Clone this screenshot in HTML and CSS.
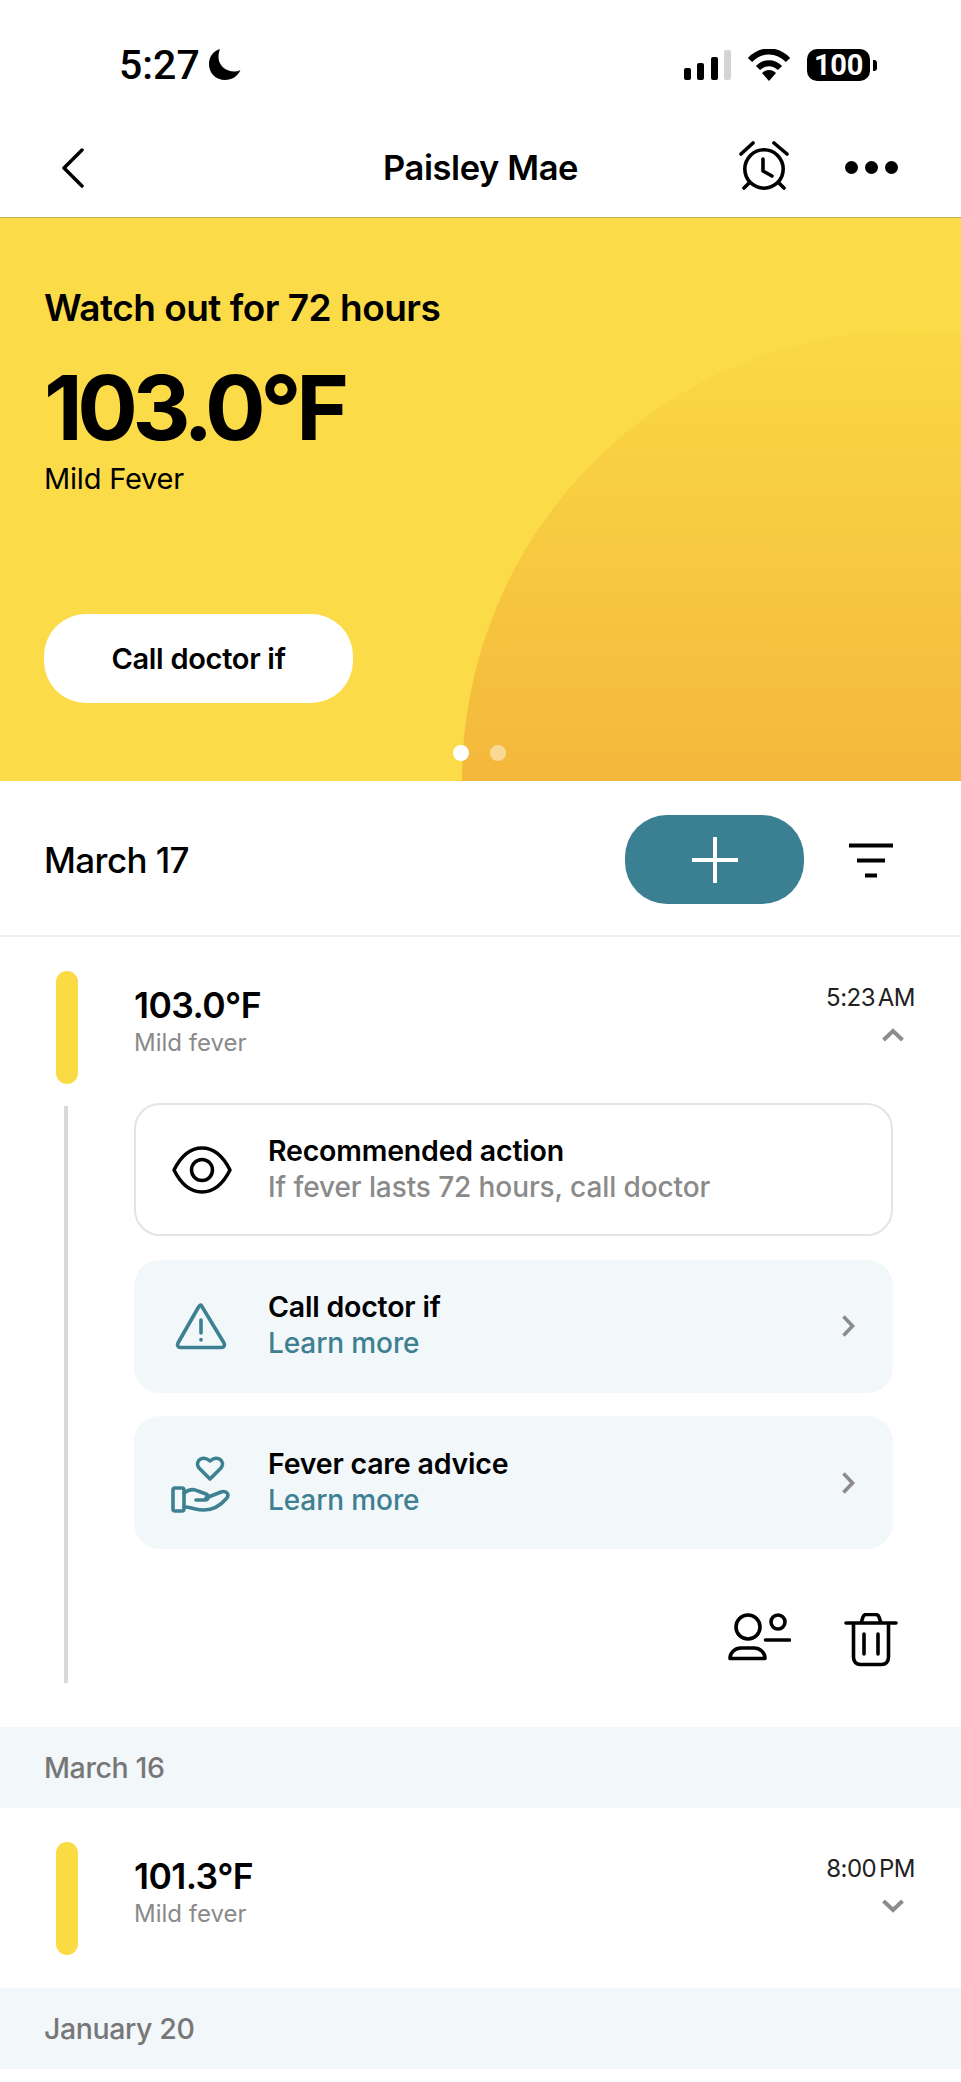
FILE: index.html
```html
<!DOCTYPE html>
<html>
<head>
    <meta charset="UTF-8">
    <title>Paisley Mae</title>
    <link rel="stylesheet" href="styles.css">
</head>
<body>
    <div class="status-bar">
        <div class="status-left">
            <span class="clock">5:27</span>
            <svg class="moon" width="32" height="32" viewBox="0 0 32 32"><path d="M11 0C4 2 0 8 0 15c0 9.500 7 16 16 16 7 0 12.500-3.500 15.500-10-2 1-4 1.500-6 1.500C16 22.500 9.500 16 9.500 8 9.500 5 10 2.500 11 0z"/></svg>
        </div>
        <div class="status-right">
            <svg width="47" height="30" viewBox="0 0 47 30"><rect x="0" y="18" width="7" height="12" rx="2"/><rect x="13" y="13" width="7" height="17" rx="2"/><rect x="27" y="7" width="7" height="23" rx="2"/><rect x="40" y="0" width="7" height="30" rx="2" fill="#d4d4d4"/></svg>
            <svg width="44" height="32" viewBox="0 0 44 32"><path d="M3 11C14-.5 30-.5 41 11" fill="none" stroke="#000" stroke-width="6"/><path d="M11 19c6.500-6.500 15.500-6.500 22 0" fill="none" stroke="#000" stroke-width="6"/><path d="M15 24c4-4 10-4 14 0l-7 8z"/></svg>
            <div class="battery"><span class="battery-level">100</span><span class="battery-cap"></span></div>
        </div>
    </div>

    <nav class="nav-bar">
        <svg class="back-icon" width="24" height="40" viewBox="0 0 24 40"><path d="M21 2 3 20l18 18" fill="none" stroke="#000" stroke-width="3.500" stroke-linecap="round" stroke-linejoin="round"/></svg>
        <h1 class="nav-title">Paisley Mae</h1>
        <div class="nav-actions">
            <svg class="alarm-icon" width="50" height="52" viewBox="0 0 50 52" fill="none" stroke="#000" stroke-width="3.600" stroke-linecap="round" stroke-linejoin="round"><circle cx="25" cy="28" r="19.200"/><path d="M24 18v12l9 5M2 13 14 2M48 13 35 2M5 47l5-5M45 47l-5-5"/></svg>
            <div class="more-dots"><span></span><span></span><span></span></div>
        </div>
    </nav>

    <section class="hero">
        <div class="hero-sun"></div>
        <h2 class="hero-title">Watch out for 72 hours</h2>
        <div class="hero-temp">103.0°F</div>
        <div class="hero-label">Mild Fever</div>
        <button class="hero-button">Call doctor if</button>
        <div class="pager"><span class="pager-on"></span><span class="pager-off"></span></div>
    </section>

    <div class="date-head">
        <div class="date-now">March 17</div>
        <button class="add-button">
            <svg width="46" height="46" viewBox="0 0 46 46"><path d="M23 0v46M0 23h46" stroke="#fff" stroke-width="4"/></svg>
        </button>
        <svg class="filter-icon" width="44" height="35" viewBox="0 0 44 35"><path d="M0 2.500h44M8 17.500h28M16 32.500h12" stroke="#000" stroke-width="4"/></svg>
    </div>

    <div class="entry">
        <div class="entry-bar"></div>
        <div class="entry-text">
            <div class="entry-temp">103.0°F</div>
            <div class="entry-label">Mild fever</div>
        </div>
        <div class="entry-meta">
            <div class="entry-time">5:23 AM</div>
            <svg class="entry-chevron" width="24" height="14" viewBox="0 0 24 14"><path d="M2.500 12 12 3l9.500 9" fill="none" stroke="#8c8c8c" stroke-width="4"/></svg>
        </div>
    </div>

    <div class="details">
        <div class="timeline"></div>
        <div class="details-main">
            <div class="card card-outline">
                <div class="card-icon">
                    <svg width="60" height="48" viewBox="0 0 60 48" fill="none" stroke="#000" stroke-width="3.500" stroke-linejoin="round"><path d="M2 24C9 10 19 2 30 2s21 8 28 22c-7 14-17 22-28 22S9 38 2 24z"/><circle cx="30" cy="24" r="10.500"/></svg>
                </div>
                <div class="card-text">
                    <div class="card-title">Recommended action</div>
                    <div class="card-sub">If fever lasts 72 hours, call doctor</div>
                </div>
            </div>
            <div class="card card-fill">
                <div class="card-icon">
                    <svg width="52" height="48" viewBox="0 0 52 48" fill="none" stroke="#3d8092" stroke-width="3.600" stroke-linecap="round" stroke-linejoin="round"><path d="M26 3 49 41c1.200 2.500 0 4.500-2.500 4.500h-41C3 45.500 1.800 43.500 3 41L23 6c1-2 2-3 3-3z"/><path d="M26 18v13M26 37.500v.500"/></svg>
                </div>
                <div class="card-text">
                    <div class="card-title">Call doctor if</div>
                    <div class="card-link">Learn more</div>
                </div>
                <svg class="card-chevron" width="14" height="24" viewBox="0 0 14 24"><path d="M2.500 2.500 11.500 12l-9 9.500" fill="none" stroke="#8c8c8c" stroke-width="3.600"/></svg>
            </div>
            <div class="card card-fill">
                <div class="card-icon">
                    <svg width="60" height="62" viewBox="0 0 60 62" fill="none" stroke="#3d8092" stroke-width="3.600" stroke-linecap="round" stroke-linejoin="round"><path d="M39 27 28 16c-5-6 3-14 11-7 8-7 16 1 11 7z"/><rect x="2" y="36" width="11" height="23" rx="2"/><path d="M13 41c5-4 10-4 14-2l8 3c3 1 3 6-1 6h-9M35 46l15-6c6-2 9 3 5 7-6 7-14 11-22 11-8 0-13-3-20-3"/></svg>
                </div>
                <div class="card-text">
                    <div class="card-title">Fever care advice</div>
                    <div class="card-link">Learn more</div>
                </div>
                <svg class="card-chevron" width="14" height="24" viewBox="0 0 14 24"><path d="M2.500 2.500 11.500 12l-9 9.500" fill="none" stroke="#8c8c8c" stroke-width="3.600"/></svg>
            </div>
            <div class="entry-actions">
                <svg width="64" height="48" viewBox="0 0 64 48" fill="none" stroke="#000" stroke-width="3.600" stroke-linecap="round" stroke-linejoin="round"><circle cx="21" cy="14" r="12"/><circle cx="51" cy="9" r="7"/><path d="M38.500 27h24M3 45.500c0-6 5-10.500 11-10.500h13c6 0 11 4.500 11 10.500z"/></svg>
                <svg width="54" height="54" viewBox="0 0 54 54" fill="none" stroke="#000" stroke-width="3.600" stroke-linecap="round" stroke-linejoin="round"><path d="M2 10h50M9.500 10v34c0 5 3 7.500 7 7.500h21c4 0 7-2.500 7-7.500V10M17 10l2-6c.5-1.500 1.500-2.500 3.500-2.500h9c2 0 3 1 3.500 2.500l2 6M20 21v20M34 21v20"/></svg>
            </div>
        </div>
    </div>

    <div class="date-band">March 16</div>

    <div class="entry entry-closed">
        <div class="entry-bar"></div>
        <div class="entry-text">
            <div class="entry-temp">101.3°F</div>
            <div class="entry-label">Mild fever</div>
        </div>
        <div class="entry-meta">
            <div class="entry-time">8:00 PM</div>
            <svg class="entry-chevron" width="24" height="14" viewBox="0 0 24 14"><path d="M2.500 2 12 11l9.500-9" fill="none" stroke="#8c8c8c" stroke-width="4"/></svg>
        </div>
    </div>

    <div class="date-band">January 20</div>
</body>
</html>
```

FILE: styles.css
```css
* {
    box-sizing: border-box;
}

body {
    margin: 0;
    height: 2082px;
    overflow: hidden;
    background-color: white;
    color: #000;
    font-family: Inter, "Liberation Sans", sans-serif;
}

h1, h2 {
    margin: 0;
}

button {
    border: 0;
    font-family: inherit;
}

/* status bar */
.status-bar {
    height: 124px;
    padding: 6px 84px 0 119px;
    display: flex;
    justify-content: space-between;
    align-items: center;
}

.status-left {
    display: flex;
    align-items: center;
    gap: 9px;
}

.clock {
    font-family: Roboto, sans-serif;
    font-size: 41px;
    font-weight: 500;
    line-height: 46px;
}

.status-right {
    display: flex;
    align-items: center;
    gap: 16px;
}

.battery {
    display: flex;
    align-items: center;
    gap: 3px;
}

.battery-level {
    width: 63px;
    height: 32px;
    border-radius: 10px;
    background-color: #000;
    color: white;
    text-align: center;
    font-family: Roboto, sans-serif;
    font-size: 29px;
    font-weight: 700;
    line-height: 33px;
    letter-spacing: -0.3px;
}

.battery-cap {
    width: 4px;
    height: 11px;
    border-radius: 0 3px 3px 0;
    background-color: #000;
}

/* nav */
.nav-bar {
    position: relative;
    height: 94px;
    padding: 0 63px 6px 61px;
    display: flex;
    justify-content: space-between;
    align-items: center;
    border-bottom: 1px solid #c4ae55;
}

.nav-title {
    font-size: 34.500px;
    font-weight: 600;
    letter-spacing: -0.4px;
    line-height: 40px;
    position: absolute;
    left: 0;
    right: 0;
    text-align: center;
    top: 24px;
}

.nav-actions {
    display: flex;
    align-items: center;
    gap: 56px;
}

.alarm-icon {
    margin-top: -1px;
}

.more-dots {
    display: flex;
    gap: 7px;
}

.more-dots span {
    width: 13px;
    height: 13px;
    border-radius: 50%;
    background-color: #000;
}

/* hero card */
.hero {
    position: relative;
    height: 563px;
    padding: 68px 44px 0;
    overflow: hidden;
    background-color: #fbdb48;
}

.hero-sun {
    position: absolute;
    left: 462px;
    top: 112px;
    width: 900px;
    height: 900px;
    border-radius: 50%;
    background: linear-gradient(180deg, #fad945 0%, #f4b83c 50%);
}

.hero-title, .hero-temp, .hero-label, .hero-button {
    position: relative;
}

.hero-title {
    font-size: 37px;
    font-weight: 600;
    letter-spacing: -0.5px;
    line-height: 44px;
}

.hero-temp {
    margin-top: 25px;
    font-size: 90px;
    font-weight: 700;
    letter-spacing: -5.500px;
    line-height: 106px;
}

.hero-label {
    font-size: 29px;
    line-height: 36px;
    letter-spacing: -0.2px;
}

.hero-button {
    display: block;
    margin-top: 117px;
    width: 309px;
    height: 89px;
    border-radius: 42px;
    background-color: white;
    color: #000;
    font-size: 29px;
    font-weight: 600;
    letter-spacing: -0.3px;
}

.pager {
    position: absolute;
    left: 453px;
    top: 527px;
    display: flex;
    gap: 21px;
}

.pager span {
    width: 16px;
    height: 16px;
    border-radius: 50%;
}

.pager-on {
    background-color: white;
}

.pager-off {
    background-color: rgba(255, 255, 255, 0.45);
}

/* date heading */
.date-head {
    height: 156px;
    padding: 34px 68px 0 44px;
    display: flex;
    align-items: flex-start;
    border-bottom: 2px solid #eeeeee;
}

.date-now {
    flex: 1;
    font-size: 35px;
    font-weight: 500;
    letter-spacing: -0.6px;
    line-height: 90px;
}

.add-button {
    width: 179px;
    height: 89px;
    border-radius: 42px;
    background-color: #3a7f92;
    display: flex;
    justify-content: center;
    align-items: center;
}

.filter-icon {
    margin: 28px 0 0 45px;
}

/* entries */
.entry {
    padding: 34px 46px 0 56px;
    display: flex;
}

.entry-closed {
    padding-bottom: 33px;
}

.entry-bar {
    width: 22px;
    height: 113px;
    border-radius: 11px;
    background-color: #fadb44;
}

.entry-text {
    flex: 1;
    margin-left: 56px;
    padding-top: 14px;
}

.entry-temp {
    font-size: 35.500px;
    font-weight: 600;
    letter-spacing: -0.6px;
    line-height: 42px;
}

.entry-label {
    margin-top: 0;
    color: #8a8a8a;
    font-size: 24px;
    line-height: 32px;
}

.entry-meta {
    padding-top: 11px;
    text-align: right;
}

.entry-time {
    font-size: 24px;
    letter-spacing: -0.5px;
    word-spacing: -3.500px;
    color: #222;
    line-height: 32px;
}

.entry-chevron {
    display: block;
    margin: 14px 10px 0 auto;
}

/* expanded details */
.details {
    height: 643px;
    padding: 19px 68px 0 64px;
    display: flex;
}

.timeline {
    width: 4px;
    height: 577px;
    margin-top: 3px;
    background-color: #d9d9d9;
}

.details-main {
    flex: 1;
    margin-left: 66px;
    display: flex;
    flex-direction: column;
    gap: 23.500px;
}

.card {
    height: 133px;
    border-radius: 26px;
    padding: 0 38px 0 0;
    display: flex;
    align-items: center;
}

.card-outline {
    border: 2px solid #e4e4e4;
}

.card-outline .card-icon {
    width: 132px;
}

.card-fill {
    background-color: #f2f7fa;
}

.card-icon {
    width: 134px;
    display: flex;
    justify-content: center;
}

.card-text {
    flex: 1;
    margin-top: -2px;
}

.card-title {
    font-size: 28.500px;
    font-weight: 600;
    letter-spacing: -0.2px;
    line-height: 37px;
}

.card-sub, .card-link {
    font-size: 28px;
    font-weight: 500;
    letter-spacing: -0.1px;
    line-height: 37px;
}

.card-sub {
    color: #8a8a8a;
}

.card-link {
    color: #3d8092;
}

.entry-actions {
    margin-top: 40px;
    margin-right: -5px;
    display: flex;
    justify-content: flex-end;
    align-items: flex-start;
    gap: 53px;
}

/* date bands */
.date-band {
    height: 81px;
    padding-left: 44px;
    background-color: #f2f7fa;
    color: #777777;
    font-size: 28.500px;
    font-weight: 500;
    letter-spacing: -0.4px;
    line-height: 81px;
}
```
